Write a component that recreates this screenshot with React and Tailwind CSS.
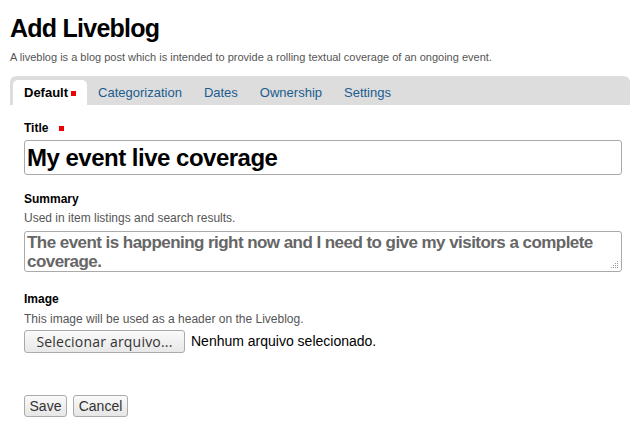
export default function App() {
  const tabs = ['Categorization', 'Dates', 'Ownership', 'Settings']
  return (
    <div className="min-h-screen w-[640px] h-[440px] bg-white font-[family-name:Liberation_Sans,Arial,sans-serif] overflow-hidden">
      <div className="px-[10px] pt-[13px]">
        <h1 className="text-[25px] leading-[30px] font-bold tracking-[-0.75px] text-black">Add Liveblog</h1>
        <p className="mt-[7px] text-[11px] leading-[14px] text-[#555]">
          A liveblog is a blog post which is intended to provide a rolling textual coverage of an ongoing event.
        </p>

        {/* tabs */}
        <div className="mt-[12px] h-[29px] bg-[#dddddd] rounded-t-[6px] flex items-end pl-[3px]">
          <div className="h-[25px] bg-white rounded-t-[5px] px-[11px] flex items-center text-[13px] font-bold text-black">
            Default
            <span className="ml-[3px] mt-[2px] w-[5px] h-[5px] bg-[#ee0000]" />
          </div>
          {tabs.map((t) => (
            <div key={t} className="h-[25px] px-[11px] flex items-center text-[13px] text-[#205c90]">
              {t}
            </div>
          ))}
        </div>

        {/* form */}
        <div className="px-[14px] pr-[8px] pt-[16px]">
          <div className="flex items-center text-[12px] leading-[15px] font-bold text-black">
            Title
            <span className="ml-[11px] w-[5px] h-[5px] bg-[#ee0000]" />
          </div>
          <div className="mt-[4px] h-[35px] border border-[#aaaaaa] rounded-[3px] px-[2px] flex items-center">
            <span className="text-[24px] font-bold tracking-[-0.5px] text-black leading-none">My event live coverage</span>
          </div>

          <div className="mt-[17px] text-[12px] leading-[15px] font-bold text-black">Summary</div>
          <div className="mt-[4px] text-[12px] leading-[15px] text-[#555]">Used in item listings and search results.</div>
          <div className="relative mt-[5px] h-[41px] border border-[#aaaaaa] rounded-[3px] px-[2px] pt-[1px]">
            <div className="text-[17px] leading-[19px] font-bold tracking-[-0.55px] text-[#666]">
              The event is happening right now and I need to give my visitors a complete coverage.
            </div>
            <svg className="absolute right-[2px] bottom-[2px]" width="8" height="8" viewBox="0 0 8 8">
              <g fill="#999">
                <rect x="6" y="0" width="1" height="1" />
                <rect x="4" y="2" width="1" height="1" />
                <rect x="6" y="2" width="1" height="1" />
                <rect x="2" y="4" width="1" height="1" />
                <rect x="4" y="4" width="1" height="1" />
                <rect x="6" y="4" width="1" height="1" />
                <rect x="0" y="6" width="1" height="1" />
                <rect x="2" y="6" width="1" height="1" />
                <rect x="4" y="6" width="1" height="1" />
                <rect x="6" y="6" width="1" height="1" />
              </g>
            </svg>
          </div>

          <div className="mt-[20px] text-[12px] leading-[15px] font-bold text-black">Image</div>
          <div className="mt-[5px] text-[12px] leading-[15px] text-[#555]">This image will be used as a header on the Liveblog.</div>
          <div className="mt-[3px] flex items-center">
            <button className="h-[23px] w-[161px] border border-[#aaaaaa] rounded-[3px] bg-gradient-to-b from-[#fafafa] to-[#e8e8e8] text-[14px] text-[#333] font-[family-name:Open_Sans,DejaVu_Sans,sans-serif] tracking-[0.2px]">
              Selecionar arquivo...
            </button>
            <span className="ml-[6px] text-[14px] text-black">Nenhum arquivo selecionado.</span>
          </div>

          <div className="mt-[42px] flex gap-[6px]">
            <button className="h-[22px] w-[43px] border border-[#aaaaaa] rounded-[3px] bg-gradient-to-b from-[#fafafa] to-[#e6e6e6] text-[14px] text-[#333]">
              Save
            </button>
            <button className="h-[22px] w-[55px] border border-[#aaaaaa] rounded-[3px] bg-gradient-to-b from-[#fafafa] to-[#e6e6e6] text-[14px] text-[#333]">
              Cancel
            </button>
          </div>
        </div>
      </div>
    </div>
  )
}
